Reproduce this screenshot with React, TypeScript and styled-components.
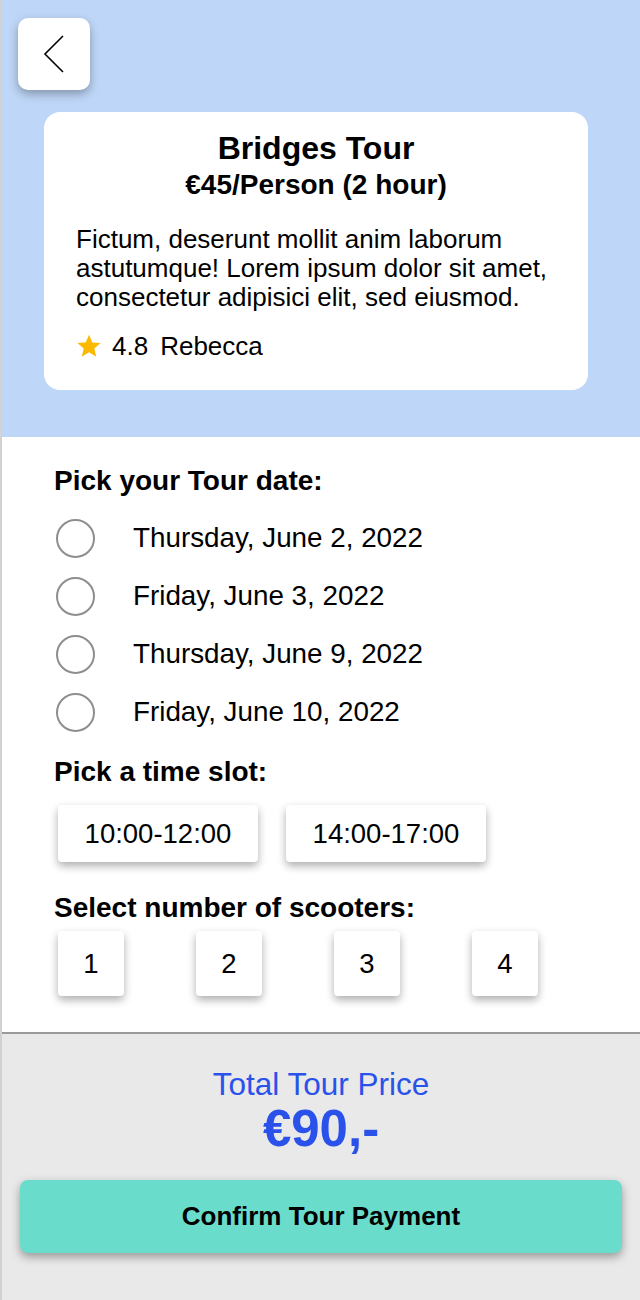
import React from "react";
import styled, { createGlobalStyle } from "styled-components";

const GlobalStyle = createGlobalStyle`
  html, body { margin: 0; padding: 0; }
  body {
    font-family: "Liberation Sans", Arial, Helvetica, sans-serif;
    color: #000;
    background: #e9e9e9;
  }
  * { box-sizing: border-box; }
`;

const Screen = styled.div`
  width: 640px;
  min-height: 1300px;
  display: flex;
  flex-direction: column;
  border-left: 2px solid #d2d2d2;
`;

const Header = styled.header`
  background: #bed6f7;
  padding: 18px 52px 47px 16px;
  display: flex;
  flex-direction: column;
`;

const BackButton = styled.button`
  width: 72px;
  height: 72px;
  border: none;
  border-radius: 10px;
  background: #fff;
  box-shadow: 0 4px 10px rgba(0, 0, 0, 0.3);
  display: flex;
  align-items: center;
  justify-content: center;
  padding: 0;
  cursor: pointer;
`;

const Card = styled.section`
  margin: 22px 0 0 26px;
  background: #fff;
  border-radius: 16px;
  padding: 18px 32px 29px 32px;
  display: flex;
  flex-direction: column;
`;

const Title = styled.h1`
  margin: 0;
  text-align: center;
  font-size: 32px;
  line-height: 36px;
  font-weight: 700;
`;

const Subtitle = styled.h2`
  margin: 2px 0 0;
  text-align: center;
  font-size: 28px;
  line-height: 34px;
  font-weight: 700;
`;

const Description = styled.p`
  margin: 23px 0 0;
  font-size: 26px;
  line-height: 29px;
`;

const Rating = styled.div`
  margin-top: 19px;
  display: flex;
  align-items: center;
  gap: 10px;
  font-size: 26px;
  line-height: 30px;
`;

const Guide = styled.span`
  margin-left: 2px;
`;

const Booking = styled.main`
  background: #fff;
  padding: 28px 40px 36px 52px;
  border-bottom: 2px solid #9a9a9a;
  display: flex;
  flex-direction: column;
`;

const SectionTitle = styled.h3<{ $gap: number }>`
  margin: ${(p) => p.$gap}px 0 0;
  font-size: 28px;
  line-height: 32px;
  font-weight: 700;
`;

const DateList = styled.div`
  margin-top: 12px;
  display: flex;
  flex-direction: column;
`;

const DateRow = styled.label`
  height: 58px;
  display: flex;
  align-items: center;
  gap: 38px;
  padding-left: 2px;
  font-size: 27.8px;
  cursor: pointer;
`;

const Radio = styled.span`
  width: 39px;
  height: 39px;
  border-radius: 50%;
  border: 2px solid #8e8e8e;
  background: #fff;
  flex: none;
`;

const SlotRow = styled.div`
  margin-top: 17px;
  padding-left: 4px;
  display: flex;
  gap: 28px;
`;

const Chip = styled.button<{ $w: number; $h: number }>`
  width: ${(p) => p.$w}px;
  height: ${(p) => p.$h}px;
  border: none;
  border-radius: 4px;
  background: #fff;
  box-shadow: 0 4px 9px rgba(0, 0, 0, 0.32);
  font-family: inherit;
  font-size: 27.5px;
  color: #000;
  display: flex;
  align-items: center;
  justify-content: center;
  padding: 0;
  cursor: pointer;
`;

const CountRow = styled.div`
  margin-top: 7px;
  padding-left: 4px;
  display: flex;
  gap: 72px;
`;

const Footer = styled.footer`
  flex: 1;
  background: #e9e9e9;
  padding: 32px 18px 47px 18px;
  display: flex;
  flex-direction: column;
  align-items: stretch;
`;

const TotalLabel = styled.div`
  text-align: center;
  color: #2a52ea;
  font-size: 31.5px;
  line-height: 36px;
`;

const TotalPrice = styled.div`
  text-align: center;
  color: #2a52ea;
  font-size: 51px;
  line-height: 54px;
  font-weight: 700;
`;

const ConfirmButton = styled.button`
  margin-top: 24px;
  height: 73px;
  border: none;
  border-radius: 8px;
  background: #6adccb;
  box-shadow: 0 4px 10px rgba(0, 0, 0, 0.35);
  font-family: inherit;
  font-size: 26px;
  font-weight: 700;
  color: #000;
  cursor: pointer;
`;

const dates = [
  "Thursday, June 2, 2022",
  "Friday, June 3, 2022",
  "Thursday, June 9, 2022",
  "Friday, June 10, 2022",
];

const slots = ["10:00-12:00", "14:00-17:00"];
const counts = [1, 2, 3, 4];

export default function App() {
  return (
    <>
      <GlobalStyle />
      <Screen>
        <Header>
          <BackButton aria-label="Back">
            <svg width="22" height="40" viewBox="0 0 22 40" fill="none">
              <path d="M20 2 L2 20 L20 38" stroke="#000" strokeWidth="1.6" strokeLinejoin="miter" />
            </svg>
          </BackButton>
          <Card>
            <Title>Bridges Tour</Title>
            <Subtitle>€45/Person (2 hour)</Subtitle>
            <Description>
              Fictum, deserunt mollit anim laborum astutumque! Lorem ipsum dolor sit amet,
              consectetur adipisici elit, sed eiusmod.
            </Description>
            <Rating>
              <svg width="26" height="26" viewBox="0 0 24 24">
                <path
                  d="M12 1.5l3.1 7.2 7.6.6-5.8 5 1.8 7.6L12 17.8l-6.7 4.1 1.8-7.6-5.8-5 7.6-.6z"
                  fill="#fbba00"
                />
              </svg>
              <span>4.8</span>
              <Guide>Rebecca</Guide>
            </Rating>
          </Card>
        </Header>
        <Booking>
          <SectionTitle $gap={0}>Pick your Tour date:</SectionTitle>
          <DateList>
            {dates.map((d) => (
              <DateRow key={d}>
                <Radio />
                {d}
              </DateRow>
            ))}
          </DateList>
          <SectionTitle $gap={15}>Pick a time slot:</SectionTitle>
          <SlotRow>
            {slots.map((s) => (
              <Chip key={s} $w={200} $h={57}>
                {s}
              </Chip>
            ))}
          </SlotRow>
          <SectionTitle $gap={30}>Select number of scooters:</SectionTitle>
          <CountRow>
            {counts.map((c) => (
              <Chip key={c} $w={66} $h={65}>
                {c}
              </Chip>
            ))}
          </CountRow>
        </Booking>
        <Footer>
          <TotalLabel>Total Tour Price</TotalLabel>
          <TotalPrice>€90,-</TotalPrice>
          <ConfirmButton>Confirm Tour Payment</ConfirmButton>
        </Footer>
      </Screen>
    </>
  );
}
